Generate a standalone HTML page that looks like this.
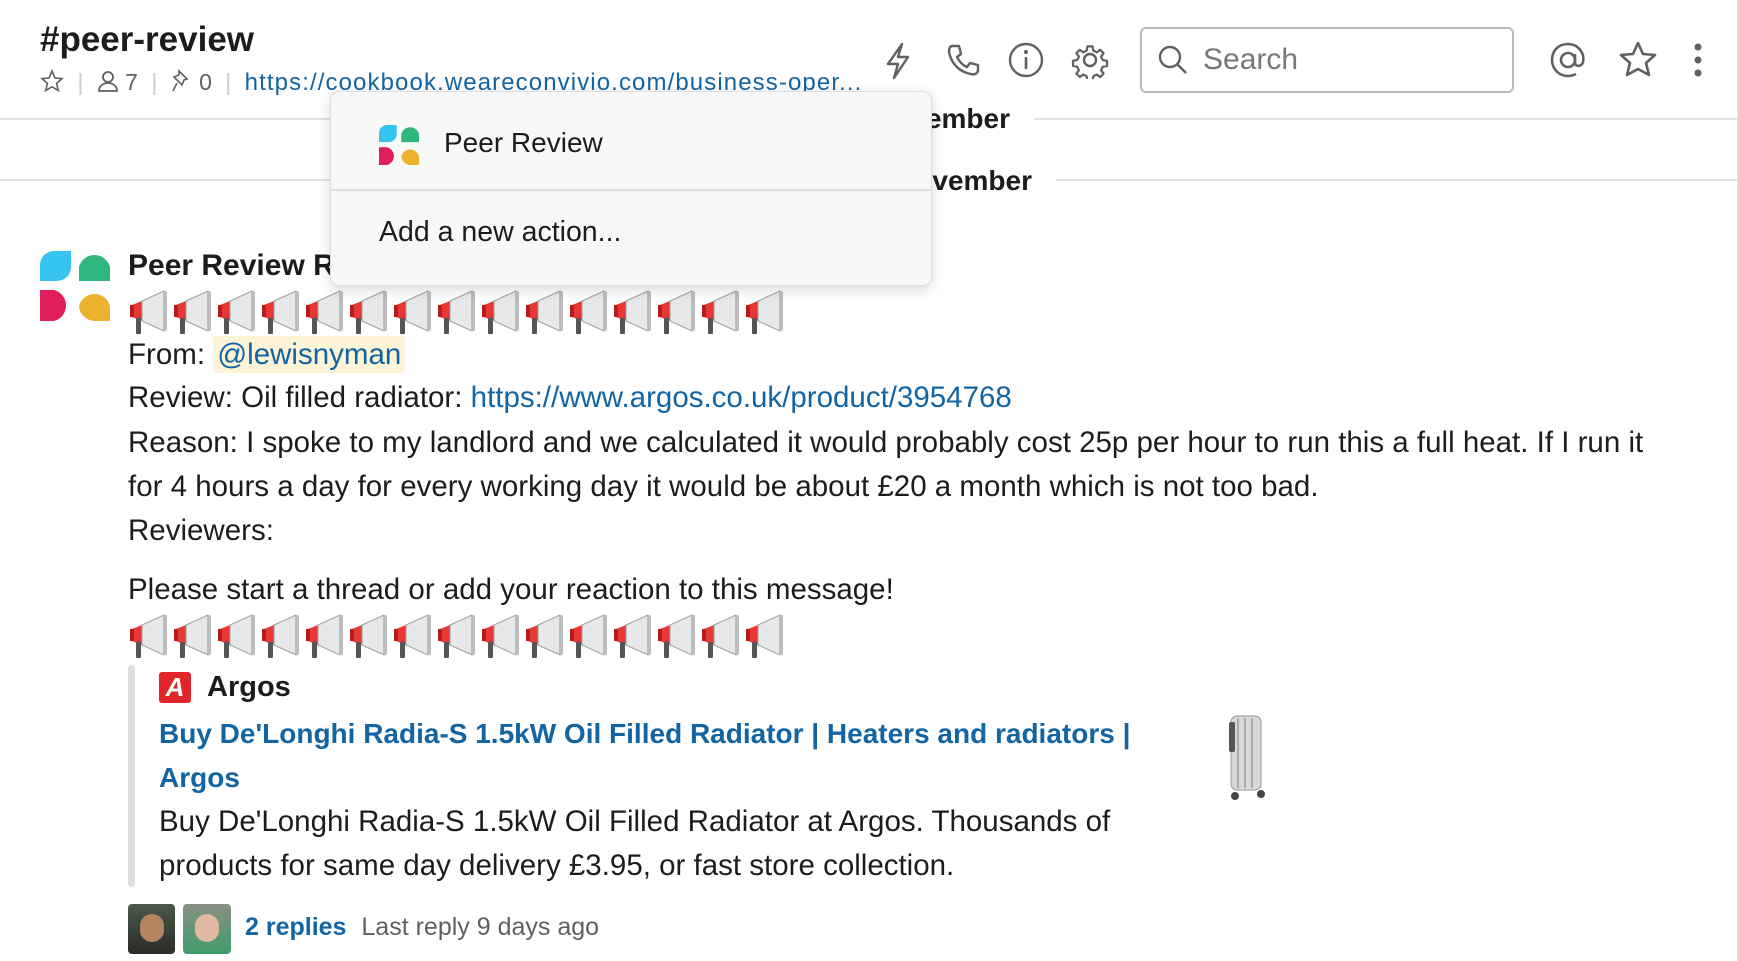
<!DOCTYPE html>
<html><head><meta charset="utf-8"><style>
*{margin:0;padding:0;box-sizing:border-box}
body{width:1739px;height:961px;overflow:hidden;background:#fff;font-family:"Liberation Sans",sans-serif;color:#1d1c1d;position:relative}
.a{position:absolute;white-space:nowrap}
.hl{position:absolute;height:2px;background:#e2e2e2}
a{color:#1264a3;text-decoration:none}
.t{font-size:29.5px;line-height:44px}
.ic{position:absolute}
</style></head><body>
<svg width="0" height="0" style="position:absolute"><defs>
<g id="mg">
<path d="M4 18 L14 14 L14 34 L4 30 Z" fill="#e53935"/>
<rect x="2" y="18" width="4" height="12" fill="#b71c1c"/>
<path d="M14 14 L36 4 L36 44 L14 34 Z" fill="#e8e8e8" stroke="#9e9e9e" stroke-width="1"/>
<rect x="35" y="4" width="4" height="40" rx="2" fill="#bdbdbd"/>
<rect x="8" y="31" width="5" height="16" rx="1" fill="#555"/>
</g>
</defs></svg>

<div class="a" style="left:40px;top:20px;font-size:35px;font-weight:bold">#peer-review</div>
<div class="a" style="left:40px;top:69px;font-size:23px;color:#616061">
<svg width="24" height="24" viewBox="0 0 24 24" style="vertical-align:-3px"><path d="M12 2l3 7 7 .6-5.4 4.7 1.7 7.2L12 17.8 5.7 21.5l1.7-7.2L2 9.6 9 9z" fill="none" stroke="#616061" stroke-width="1.6"/></svg>
<span style="color:#ccc;margin:0 7px">|</span>
<svg width="22" height="24" viewBox="0 0 22 24" style="vertical-align:-3px"><circle cx="11" cy="8" r="5" fill="none" stroke="#616061" stroke-width="1.8"/><path d="M2 22c0-5 4-8 9-8s9 3 9 8z" fill="none" stroke="#616061" stroke-width="1.8"/></svg> 7
<span style="color:#ccc;margin:0 7px">|</span>
<svg width="22" height="24" viewBox="0 0 22 24" style="vertical-align:-3px"><path d="M8 2l8 8-3 1-2 5-8-8 5-2zM6 14l-4 8" fill="none" stroke="#616061" stroke-width="1.6"/></svg> 0
<span style="color:#ccc;margin:0 7px">|</span>
<a style="font-size:24px;letter-spacing:1.1px">https://cookbook.weareconvivio.com/business-oper...</a></div>
<div class="hl" style="left:0;top:118px;width:1739px"></div>
<div class="hl" style="left:0;top:179px;width:1739px"></div>
<div class="a" style="top:0;width:2px;height:961px;background:#ddd;left:1737px"></div>
<div class="a" style="right:705px;top:103px;font-size:28px;font-weight:bold;background:#fff;padding:0 24px">December</div>
<div class="a" style="right:683px;top:165px;font-size:28px;font-weight:bold;background:#fff;padding:0 24px">November</div>

<svg class="ic" style="left:880px;top:42px" width="36" height="38" viewBox="0 0 36 38"><path d="M22 2L8 22h10l-4 14 14-21H18z" fill="none" stroke="#616061" stroke-width="2.4" stroke-linejoin="round"/></svg>
<svg class="ic" style="left:944px;top:42px" width="36" height="38" viewBox="0 0 36 38"><path d="M9 4l6 0 2 8-4 3c2 4 5 8 10 10l3-4 8 2v6c-1 3-4 4-7 3C15 30 7 21 5 10 5 6 6 4 9 4z" fill="none" stroke="#616061" stroke-width="2.4" stroke-linejoin="round"/></svg>
<svg class="ic" style="left:1007px;top:41px" width="38" height="38" viewBox="0 0 38 38"><circle cx="19" cy="19" r="16" fill="none" stroke="#616061" stroke-width="2.4"/><circle cx="19" cy="11" r="2" fill="#616061"/><path d="M19 16v12" stroke="#616061" stroke-width="2.6"/></svg>
<svg class="ic" style="left:1071px;top:41px" width="38" height="38" viewBox="0 0 38 38"><circle cx="19" cy="19" r="6" fill="none" stroke="#616061" stroke-width="2.4"/><path d="M16 3h6l1 5 4 2 4-3 4 4-3 4 2 4 5 1v6l-5 1-2 4 3 4-4 4-4-3-4 2-1 5h-6l-1-5-4-2-4 3-4-4 3-4-2-4-5-1v-6l5-1 2-4-3-4 4-4 4 3 4-2z" transform="translate(19 19) scale(.85) translate(-19 -19)" fill="none" stroke="#616061" stroke-width="2.6" stroke-linejoin="round"/></svg>
<div class="a" style="left:1140px;top:27px;width:374px;height:66px;border:2px solid #bbb;border-radius:6px"></div>
<svg class="ic" style="left:1157px;top:44px" width="32" height="32" viewBox="0 0 32 32"><circle cx="13" cy="13" r="10" fill="none" stroke="#616061" stroke-width="2.4"/><path d="M20 20l9 9" stroke="#616061" stroke-width="2.6"/></svg>
<div class="a" style="left:1203px;top:43px;font-size:30px;color:#777">Search</div>
<svg class="ic" style="left:1548px;top:40px" width="40" height="40" viewBox="0 0 40 40"><circle cx="20" cy="20" r="7" fill="none" stroke="#616061" stroke-width="2.6"/><path d="M27 14v9c0 4 7 4 8-1 2-9-5-18-15-18S4 11 4 20s7 16 16 16c3 0 6-1 8-2" fill="none" stroke="#616061" stroke-width="2.6"/></svg>
<svg class="ic" style="left:1618px;top:40px" width="40" height="40" viewBox="0 0 40 40"><path d="M20 3l5 11 12 1-9 8 3 12-11-6-11 6 3-12-9-8 12-1z" fill="none" stroke="#616061" stroke-width="2.6" stroke-linejoin="round"/></svg>
<svg class="ic" style="left:1692px;top:42px" width="12" height="36" viewBox="0 0 12 36"><circle cx="6" cy="5" r="3.5" fill="#616061"/><circle cx="6" cy="18" r="3.5" fill="#616061"/><circle cx="6" cy="31" r="3.5" fill="#616061"/></svg>

<svg class="ic" style="left:40px;top:251px" width="70" height="70" viewBox="0 0 70 70">
<path d="M0 14A14 14 0 0 1 14 0H31V16A14 14 0 0 1 17 30H0Z" fill="#36c5f0"/>
<path d="M39 16A16 16 0 0 1 70 16V30H39Z" fill="#2eb67d"/>
<path d="M0 39H14A16 16 0 0 1 14 70H0Z" fill="#e01e5a"/>
<path d="M39 55A16 16 0 0 1 70 55V70H55A16 16 0 0 1 39 55Z" fill="#ecb22e"/>
</svg>
<div class="a" style="left:128px;top:249px;font-size:30px;font-weight:bold">Peer Review Reminder</div>
<svg class="ic" style="left:128px;top:287px" width="660" height="48"><use href="#mg"/><use href="#mg" x="44"/><use href="#mg" x="88"/><use href="#mg" x="132"/><use href="#mg" x="176"/><use href="#mg" x="220"/><use href="#mg" x="264"/><use href="#mg" x="308"/><use href="#mg" x="352"/><use href="#mg" x="396"/><use href="#mg" x="440"/><use href="#mg" x="484"/><use href="#mg" x="528"/><use href="#mg" x="572"/><use href="#mg" x="616"/></svg>
<div class="a t" style="left:128px;top:333px">From: <span style="background:#fdf3d6;color:#1264a3;padding:2px 4px;border-radius:4px">@lewisnyman</span></div>
<div class="a t" style="left:128px;top:376px">Review: Oil filled radiator: <a>https://www.argos.co.uk/product/3954768</a></div>
<div class="a t" style="left:128px;top:421px">Reason: I spoke to my landlord and we calculated it would probably cost 25p per hour to run this a full heat. If I run it</div>
<div class="a t" style="left:128px;top:465px">for 4 hours a day for every working day it would be about £20 a month which is not too bad.</div>
<div class="a t" style="left:128px;top:509px">Reviewers:</div>
<div class="a t" style="left:128px;top:568px">Please start a thread or add your reaction to this message!</div>
<svg class="ic" style="left:128px;top:611px" width="660" height="48"><use href="#mg"/><use href="#mg" x="44"/><use href="#mg" x="88"/><use href="#mg" x="132"/><use href="#mg" x="176"/><use href="#mg" x="220"/><use href="#mg" x="264"/><use href="#mg" x="308"/><use href="#mg" x="352"/><use href="#mg" x="396"/><use href="#mg" x="440"/><use href="#mg" x="484"/><use href="#mg" x="528"/><use href="#mg" x="572"/><use href="#mg" x="616"/></svg>

<div class="a" style="left:128px;top:665px;width:7px;height:222px;background:#ddd;border-radius:4px"></div>
<div class="a" style="left:159px;top:672px;width:32px;height:31px;background:#e0262b;border-radius:3px;color:#fff;font-weight:bold;font-style:italic;font-size:26px;line-height:31px;text-align:center">A</div>
<div class="a" style="left:207px;top:671px;font-size:29px;font-weight:bold">Argos</div>
<div class="a" style="left:159px;top:712px;font-size:28px;font-weight:bold;line-height:44px;color:#1264a3">Buy De'Longhi Radia-S 1.5kW Oil Filled Radiator | Heaters and radiators |<br>Argos</div>
<div class="a t" style="left:159px;top:800px">Buy De'Longhi Radia-S 1.5kW Oil Filled Radiator at Argos. Thousands of<br>products for same day delivery £3.95, or fast store collection.</div>
<svg class="ic" style="left:1225px;top:708px" width="44" height="94" viewBox="0 0 44 94">
<rect x="6" y="8" width="30" height="74" rx="6" fill="#d8d8d8" stroke="#999"/>
<path d="M13 10v70M20 10v70M27 10v70" stroke="#aaa" stroke-width="2"/>
<rect x="4" y="14" width="6" height="30" rx="2" fill="#555"/>
<circle cx="10" cy="88" r="4" fill="#444"/><circle cx="36" cy="86" r="4" fill="#444"/>
</svg>

<div class="a" style="left:128px;top:904px;width:47px;height:50px;background:linear-gradient(#4a5a48,#2b2b28);border-radius:4px"><div style="margin:10px auto 0;width:24px;height:28px;border-radius:12px;background:#b58463"></div></div>
<div class="a" style="left:183px;top:904px;width:48px;height:50px;background:linear-gradient(#8a8f86,#3f9c6a);border-radius:4px"><div style="margin:10px auto 0;width:24px;height:28px;border-radius:12px;background:#e0b9a2"></div></div>
<div class="a" style="left:245px;top:913px;font-size:25px"><a style="font-weight:bold">2 replies</a> <span style="color:#616061;margin-left:8px">Last reply 9 days ago</span></div>

<div class="a" style="left:330px;top:91px;width:602px;height:195px;background:#f8f8f8;border:1px solid #ddd;border-radius:9px;box-shadow:0 4px 14px rgba(0,0,0,.15)">
<svg style="position:absolute;left:48px;top:33px" width="40" height="40" viewBox="0 0 70 70">
<path d="M0 14A14 14 0 0 1 14 0H31V16A14 14 0 0 1 17 30H0Z" fill="#36c5f0"/>
<path d="M39 16A16 16 0 0 1 70 16V30H39Z" fill="#2eb67d"/>
<path d="M0 39H14A16 16 0 0 1 14 70H0Z" fill="#e01e5a"/>
<path d="M39 55A16 16 0 0 1 70 55V70H55A16 16 0 0 1 39 55Z" fill="#ecb22e"/>
</svg>
<div class="a" style="left:113px;top:35px;font-size:28px">Peer Review</div>
<div class="a" style="left:0;top:97px;width:600px;height:2px;background:#ddd"></div>
<div class="a" style="left:48px;top:124px;font-size:28.5px">Add a new action...</div>
</div>
</body></html>
